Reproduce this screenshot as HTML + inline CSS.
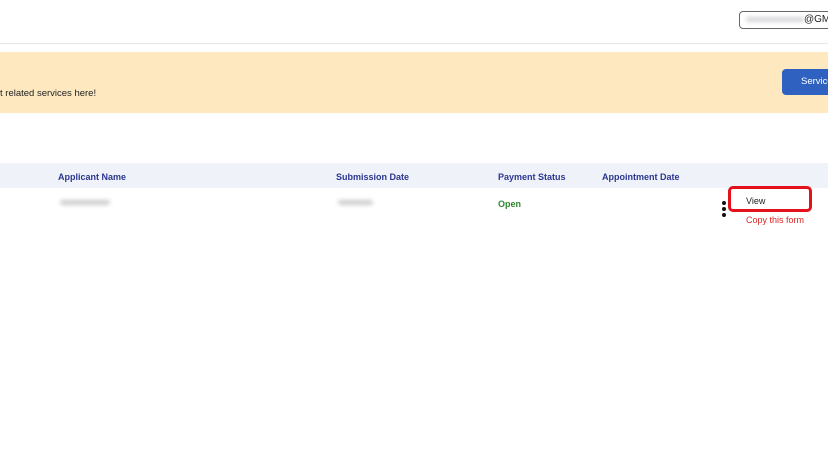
<!DOCTYPE html>
<html><head><style>
body{margin:0;width:828px;height:465px;background:#fff;position:relative;overflow:hidden;font-family:"Liberation Sans",Arial,sans-serif}
.a{position:absolute}
.h{font-size:9px;font-weight:bold;color:#2c3590;top:172px}
.blur{background:#ccc;filter:blur(2px);height:5px;border-radius:3px}
</style></head><body>
<div class="a" style="left:0;top:43px;width:828px;height:1px;background:#e6e6e6"></div>
<div class="a" style="left:739px;top:11px;width:100px;height:18px;border:1.5px solid #666;border-radius:4px;background:#fff;box-sizing:border-box"></div>
<div class="a blur" style="left:746px;top:17px;width:58px;height:5px;background:#d6d6dc"></div>
<div class="a" style="left:804px;top:14px;font-size:10px;color:#222">@GMA</div>
<div class="a" style="left:0;top:52px;width:828px;height:61px;background:#fde8c0"></div>
<div class="a" style="left:0;top:88px;font-size:9.5px;color:#222">t related services here!</div>
<div class="a" style="left:782px;top:69px;width:60px;height:26px;background:#2f62c0;border-radius:4px;color:#fff;font-size:9.5px;line-height:26px;padding-left:19px;box-sizing:border-box">Service</div>
<div class="a" style="left:0;top:163px;width:828px;height:25px;background:#eff3f9"></div>
<div class="a h" style="left:58px">Applicant Name</div>
<div class="a h" style="left:336px">Submission Date</div>
<div class="a h" style="left:498px">Payment Status</div>
<div class="a h" style="left:602px">Appointment Date</div>
<div class="a blur" style="left:60px;top:200px;width:50px"></div>
<div class="a blur" style="left:338px;top:200px;width:35px"></div>
<div class="a" style="left:498px;top:199px;font-size:9px;font-weight:bold;color:#2e8a2e">Open</div>
<div class="a" style="left:722px;top:201px;font-size:0">
<div style="width:4px;height:4px;background:#111;border-radius:2px;margin-bottom:2px"></div>
<div style="width:4px;height:4px;background:#111;border-radius:2px;margin-bottom:2px"></div>
<div style="width:4px;height:4px;background:#111;border-radius:2px"></div></div>
<div class="a" style="left:728px;top:186px;width:84px;height:26px;border:3px solid #e4101c;border-radius:5px;box-sizing:border-box"></div>
<div class="a" style="left:746px;top:196px;font-size:9px;color:#222">View</div>
<div class="a" style="left:746px;top:215px;font-size:9px;color:#d22">Copy this form</div>
</body></html>
